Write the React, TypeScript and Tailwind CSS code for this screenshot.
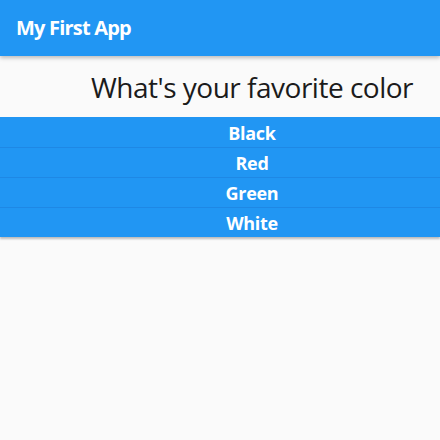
const colors = ["Black", "Red", "Green", "White"];

export default function App() {
  return (
    <div className="flex h-[440px] w-[440px] flex-col bg-[#fafafa] font-['Open_Sans',sans-serif]">
      <header className="relative z-10 flex h-14 items-center bg-[#2196f3] px-4 shadow-[0_2px_4px_rgba(0,0,0,0.25)]">
        <h1 className="text-[20px] font-bold tracking-[-0.8px] text-white">My First App</h1>
      </header>
      <main className="flex flex-col">
        <p className="pt-[12px] pb-[11px] pl-16 text-center text-[28px] leading-[38px] tracking-[-0.5px] text-[#1b1b1b]">
          What's your favorite color
        </p>
        <div className="flex flex-col shadow-[0_2px_2px_rgba(0,0,0,0.25)]">
          {colors.map((c) => (
            <button
              key={c}
              className="h-[30px] w-full border-t border-[#1e88e5] bg-[#2196f3] pt-[2px] pl-16 text-center text-[18px] font-bold leading-[27px] tracking-[-0.3px] text-white first:border-t-0"
            >
              {c}
            </button>
          ))}
        </div>
      </main>
    </div>
  );
}
